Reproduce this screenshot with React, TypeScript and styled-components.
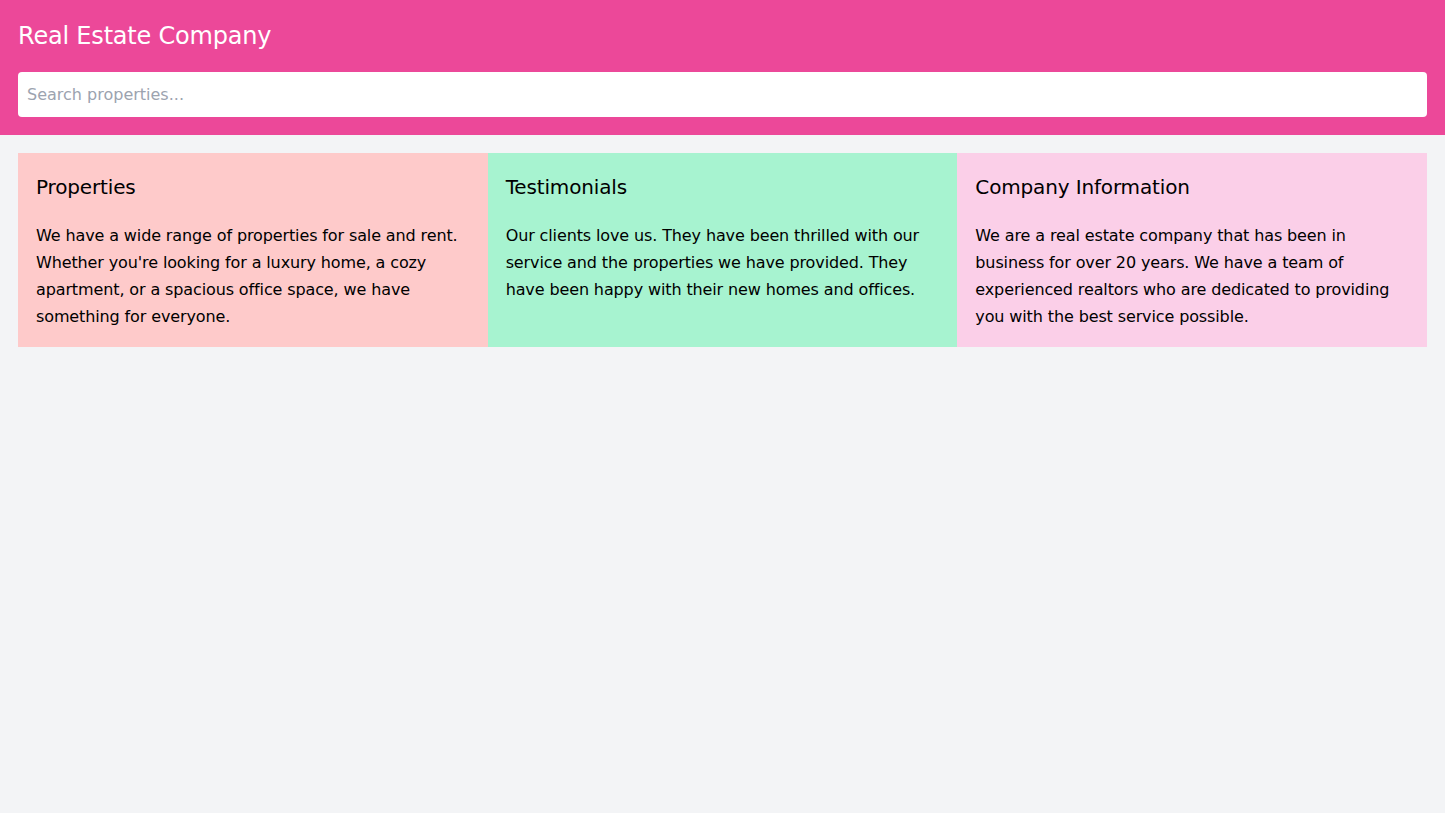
import React from 'react';
import { styled, createGlobalStyle } from 'styled-components';

const GlobalStyle = createGlobalStyle`
  * { box-sizing: border-box; }
  body {
    margin: 0;
    background: #f3f4f6;
    font-family: "DejaVu Sans", sans-serif;
    color: #000;
  }
`;

const Header = styled.header`
  background: #ec4899;
  padding: 18px;
`;

const Title = styled.h1`
  margin: 0 0 18px;
  font-size: 24px;
  line-height: 36px;
  font-weight: 400;
  letter-spacing: -0.2px;
  color: #fff;
`;

const SearchInput = styled.input`
  display: block;
  width: 100%;
  height: 45px;
  padding: 0 9px;
  border: none;
  border-radius: 4px;
  background: #fff;
  font: inherit;
  font-size: 16px;
  outline: none;

  &::placeholder {
    color: #9ca3af;
  }
`;

const Main = styled.main`
  padding: 18px;
`;

const Grid = styled.div`
  display: grid;
  grid-template-columns: repeat(3, 1fr);
`;

const Card = styled.section<{ $bg: string }>`
  background: ${p => p.$bg};
  padding: 18px 18px 17px;
`;

const CardTitle = styled.h2`
  margin: 0 0 19px;
  font-size: 20px;
  line-height: 32px;
  font-weight: 400;
  letter-spacing: -0.15px;
`;

const CardText = styled.p`
  margin: 0;
  font-size: 16px;
  line-height: 27px;
  letter-spacing: -0.12px;
`;

const cards = [
  {
    title: 'Properties',
    bg: '#fecaca',
    text: "We have a wide range of properties for sale and rent. Whether you're looking for a luxury home, a cozy apartment, or a spacious office space, we have something for everyone.",
  },
  {
    title: 'Testimonials',
    bg: '#a7f3d0',
    text: 'Our clients love us. They have been thrilled with our service and the properties we have provided. They have been happy with their new homes and offices.',
  },
  {
    title: 'Company Information',
    bg: '#fbcfe8',
    text: 'We are a real estate company that has been in business for over 20 years. We have a team of experienced realtors who are dedicated to providing you with the best service possible.',
  },
];

function App() {
  return (
    <>
      <GlobalStyle />
      <Header>
        <Title>Real Estate Company</Title>
        <SearchInput type="text" placeholder="Search properties..." />
      </Header>
      <Main>
        <Grid>
          {cards.map(card => (
            <Card key={card.title} $bg={card.bg}>
              <CardTitle>{card.title}</CardTitle>
              <CardText>{card.text}</CardText>
            </Card>
          ))}
        </Grid>
      </Main>
    </>
  );
}

export default App;
